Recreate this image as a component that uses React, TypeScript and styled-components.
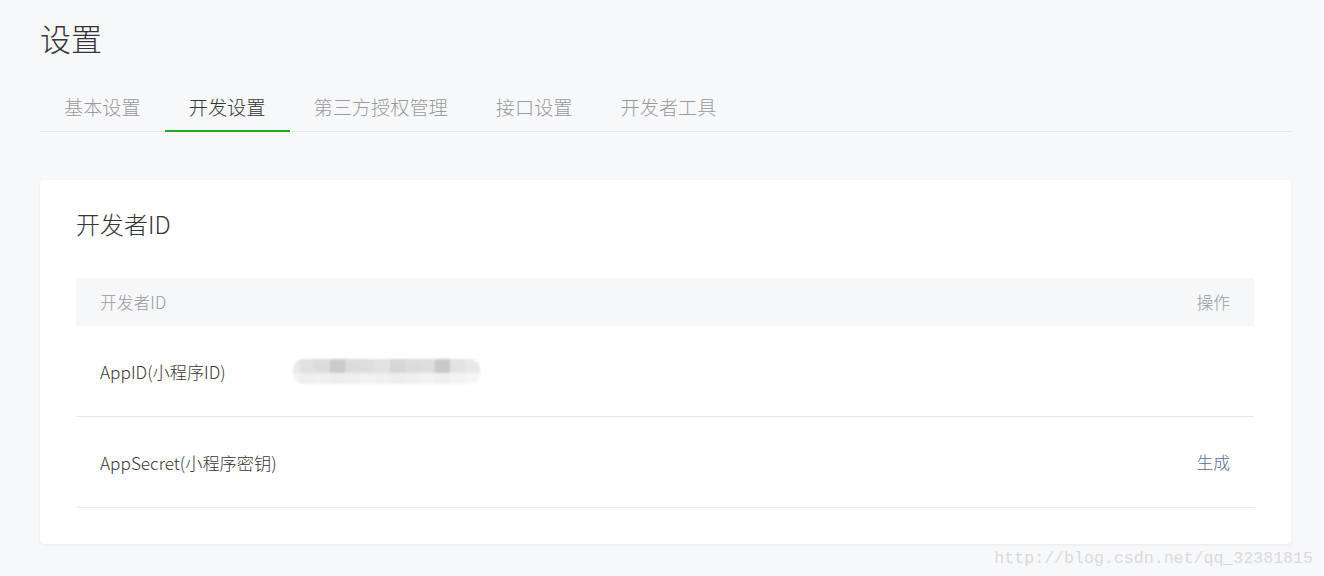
import React from "react";
import styled, { createGlobalStyle } from "styled-components";

const GlobalStyle = createGlobalStyle`
  html, body {
    margin: 0;
    padding: 0;
    background: #f7f8fa;
  }
  body {
    font-family: "Noto Sans CJK SC", "Noto Sans", sans-serif;
    font-weight: 300;
    color: #353535;
  }
`;

const Page = styled.div`
  position: relative;
  width: 1324px;
  height: 576px;
  box-sizing: border-box;
  padding: 18px 33px 0 40px;
  overflow: hidden;
`;

const Title = styled.h1`
  margin: 0;
  font-size: 31px;
  font-weight: 300;
  line-height: 40px;
  color: #353535;
`;

const Tabs = styled.nav`
  display: flex;
  margin-top: 25px;
  border-bottom: 1px solid #e7e7eb;
`;

const Tab = styled.div<{ $active?: boolean }>`
  position: relative;
  padding: 0 24px;
  height: 48px;
  line-height: 48px;
  font-size: 19.2px;
  color: ${(p) => (p.$active ? "#353535" : "#9a9a9a")};
  &::after {
    content: "";
    display: ${(p) => (p.$active ? "block" : "none")};
    position: absolute;
    left: 0;
    right: 0;
    bottom: -1px;
    height: 2px;
    background: #1aad19;
  }
`;

const Card = styled.section`
  margin-top: 48px;
  background: #fff;
  border-radius: 4px;
  box-shadow: 0 1px 3px rgba(0, 0, 0, 0.06);
  padding: 24px 37px 36px 36px;
`;

const CardTitle = styled.h2`
  margin: 0;
  font-size: 24px;
  font-weight: 300;
  line-height: 40px;
  color: #353535;
`;

const Table = styled.div`
  margin-top: 34px;
`;

const HeadRow = styled.div`
  display: flex;
  align-items: center;
  justify-content: space-between;
  height: 48px;
  padding: 0 24px;
  background: #f6f7f9;
  font-size: 16.8px;
  color: #9a9a9a;
`;

const Row = styled.div`
  display: flex;
  align-items: center;
  height: 90px;
  padding: 0 24px;
  border-bottom: 1px solid #e7e7eb;
  font-size: 17.2px;
  color: #353535;
`;

const Label = styled.div`
  width: 193px;
  flex: none;
`;

const Value = styled.div`
  flex: 1;
`;

const Action = styled.a`
  color: #576b95;
  font-size: 16.8px;
  text-decoration: none;
  cursor: pointer;
`;

const Mosaic = styled.div`
  display: grid;
  grid-template-columns: 7px repeat(12, 15px);
  grid-template-rows: 14px 11px;
  width: 187px;
  border-radius: 10px;
  overflow: hidden;
  filter: blur(0.8px);
`;

const Cell = styled.div<{ $tone: string }>`
  background: ${(p) => p.$tone};
`;

const Watermark = styled.div`
  position: absolute;
  right: 11px;
  bottom: 8px;
  font-family: "Liberation Mono", monospace;
  font-weight: 400;
  font-size: 16.6px;
  color: #dadada;
`;

const topTones = ["#e9e9e9", "#e0e0e0", "#dcdcdc", "#cbcbcb", "#dcdcdc", "#dedede", "#e3e3e3", "#d6d6d6", "#dcdcdc", "#dedede", "#c9c9c9", "#e3e3e3", "#e8e8e8"];
const bottomTones = ["#f2f2f2", "#eeeeee", "#f0f0f0", "#eeeeee", "#efefef", "#f2f2f2", "#f0f0f0", "#eeeeee", "#f0f0f0", "#f3f3f3", "#efefef", "#f3f3f3", "#f6f6f6"];

const tabs = ["基本设置", "开发设置", "第三方授权管理", "接口设置", "开发者工具"];

export default function App() {
  return (
    <>
      <GlobalStyle />
      <Page>
        <Title>设置</Title>
        <Tabs>
          {tabs.map((t) => (
            <Tab key={t} $active={t === "开发设置"}>
              {t}
            </Tab>
          ))}
        </Tabs>
        <Card>
          <CardTitle>开发者ID</CardTitle>
          <Table>
            <HeadRow>
              <span>开发者ID</span>
              <span>操作</span>
            </HeadRow>
            <Row>
              <Label>AppID(小程序ID)</Label>
              <Value>
                <Mosaic>
                  {topTones.map((c, i) => (
                    <Cell key={"t" + i} $tone={c} />
                  ))}
                  {bottomTones.map((c, i) => (
                    <Cell key={"b" + i} $tone={c} />
                  ))}
                </Mosaic>
              </Value>
            </Row>
            <Row>
              <Label>AppSecret(小程序密钥)</Label>
              <Value />
              <Action>生成</Action>
            </Row>
          </Table>
        </Card>
        <Watermark>http://blog.csdn.net/qq_32381815</Watermark>
      </Page>
    </>
  );
}
